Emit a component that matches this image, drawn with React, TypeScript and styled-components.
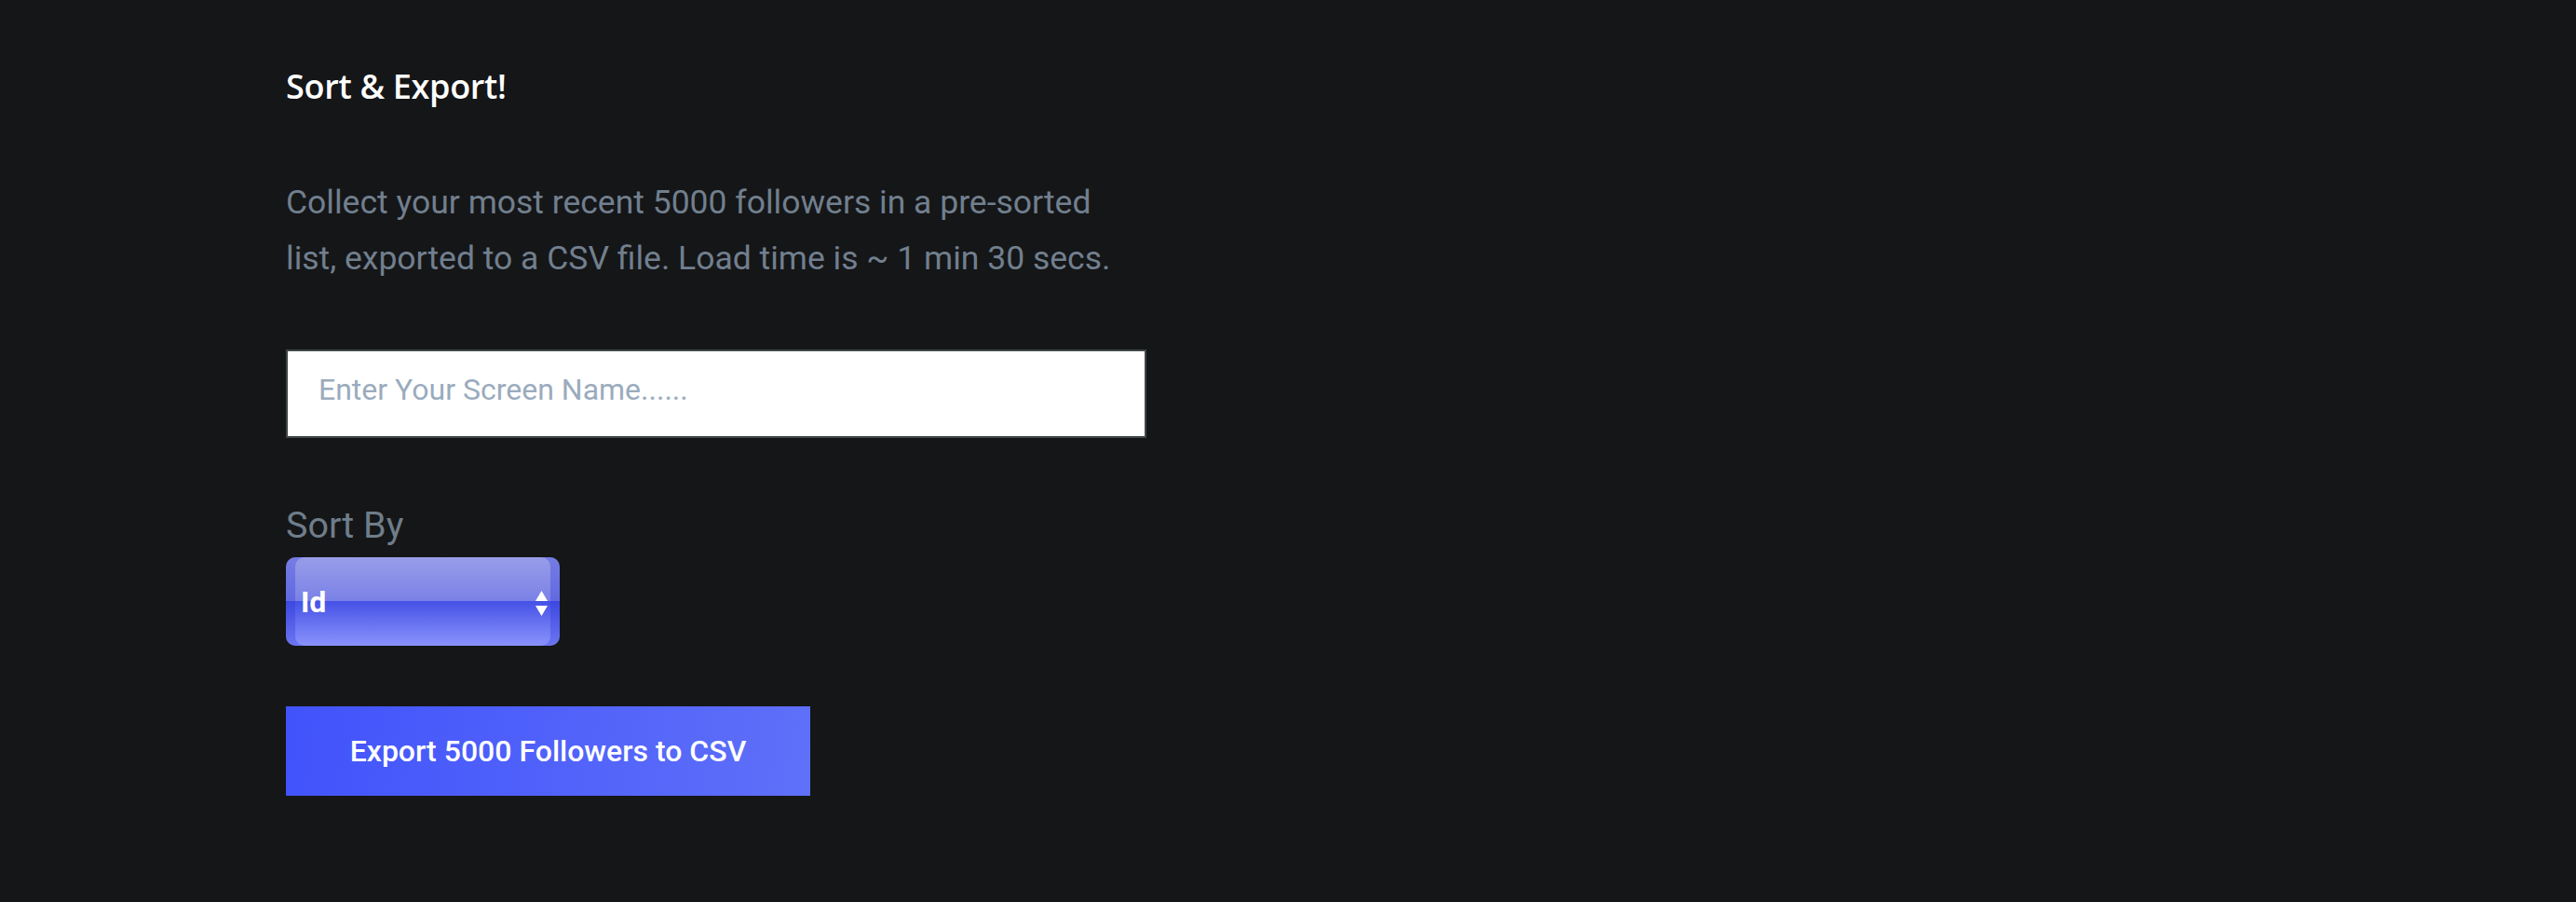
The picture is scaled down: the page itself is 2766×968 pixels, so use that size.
import React from "react";
import styled, { createGlobalStyle } from "styled-components";

const GlobalStyle = createGlobalStyle`
  html, body {
    margin: 0;
    padding: 0;
    background: #151618;
  }
  body {
    font-family: Roboto, "Liberation Sans", sans-serif;
  }
  * { box-sizing: border-box; }
`;

const Page = styled.main`
  min-height: 968px;
  background: #151618;
  padding: 71px 0 0 307px;
  display: flex;
  flex-direction: column;
  align-items: flex-start;
`;

const Title = styled.h1`
  margin: 0;
  font-family: "Open Sans", "Noto Sans", sans-serif;
  font-weight: 600;
  font-size: 36px;
  line-height: 44px;
  color: #ffffff;
  letter-spacing: -0.3px;
`;

const Description = styled.p`
  margin: 72px 0 0;
  width: 925px;
  font-family: Roboto, sans-serif;
  font-size: 35.5px;
  line-height: 60px;
  color: #717f8e;
`;

const NameInput = styled.input`
  margin-top: 68px;
  width: 924px;
  height: 95px;
  border: 2px solid #3f4749;
  background: #ffffff;
  padding: 0 33px 10px;
  font-family: Roboto, sans-serif;
  font-size: 32px;
  color: #333;
  outline: none;
  &::placeholder {
    color: #9aabbd;
  }
`;

const Label = styled.label`
  margin-top: 72px;
  font-family: Roboto, sans-serif;
  font-size: 39.5px;
  line-height: 44px;
  color: #6f7d8a;
`;

const SelectBox = styled.div`
  margin-top: 12px;
  width: 294px;
  height: 95px;
  border-radius: 10px;
  padding: 0 13px 0 16px;
  display: flex;
  align-items: center;
  justify-content: space-between;
  background:
    linear-gradient(to bottom, #989de9 0%, #7a81e6 50%, transparent 50%),
    linear-gradient(to bottom, #4652e6 50%, #8a93fc 100%);
  box-shadow:
    inset 10px 0 0 rgba(40, 50, 215, 0.3),
    inset -10px 0 0 rgba(40, 50, 215, 0.3);
  color: #ffffff;
  font-family: Roboto, sans-serif;
  font-weight: 700;
  font-size: 32px;
  cursor: pointer;
`;

const Arrows = styled.span`
  display: flex;
  flex-direction: column;
  gap: 5px;
  margin-top: 3px;
`;

const ExportButton = styled.button`
  margin-top: 65px;
  width: 563px;
  height: 96px;
  border: none;
  background: linear-gradient(100deg, #4153fb 0%, #5f70f9 100%);
  color: #ffffff;
  font-family: Roboto, sans-serif;
  font-weight: 500;
  font-size: 32px;
  cursor: pointer;
`;

export default function App() {
  return (
    <>
      <GlobalStyle />
      <Page>
        <Title>Sort &amp; Export!</Title>
        <Description>
          Collect your most recent 5000 followers in a pre-sorted list, exported to a CSV file. Load time is ~ 1 min 30 secs.
        </Description>
        <NameInput placeholder="Enter Your Screen Name......" />
        <Label>Sort By</Label>
        <SelectBox>
          <span>Id</span>
          <Arrows>
            <svg width="13" height="11" viewBox="0 0 13 11">
              <polygon points="6.5,0 13,11 0,11" fill="#fff" />
            </svg>
            <svg width="13" height="11" viewBox="0 0 13 11">
              <polygon points="0,0 13,0 6.5,11" fill="#fff" />
            </svg>
          </Arrows>
        </SelectBox>
        <ExportButton>Export 5000 Followers to CSV</ExportButton>
      </Page>
    </>
  );
}
